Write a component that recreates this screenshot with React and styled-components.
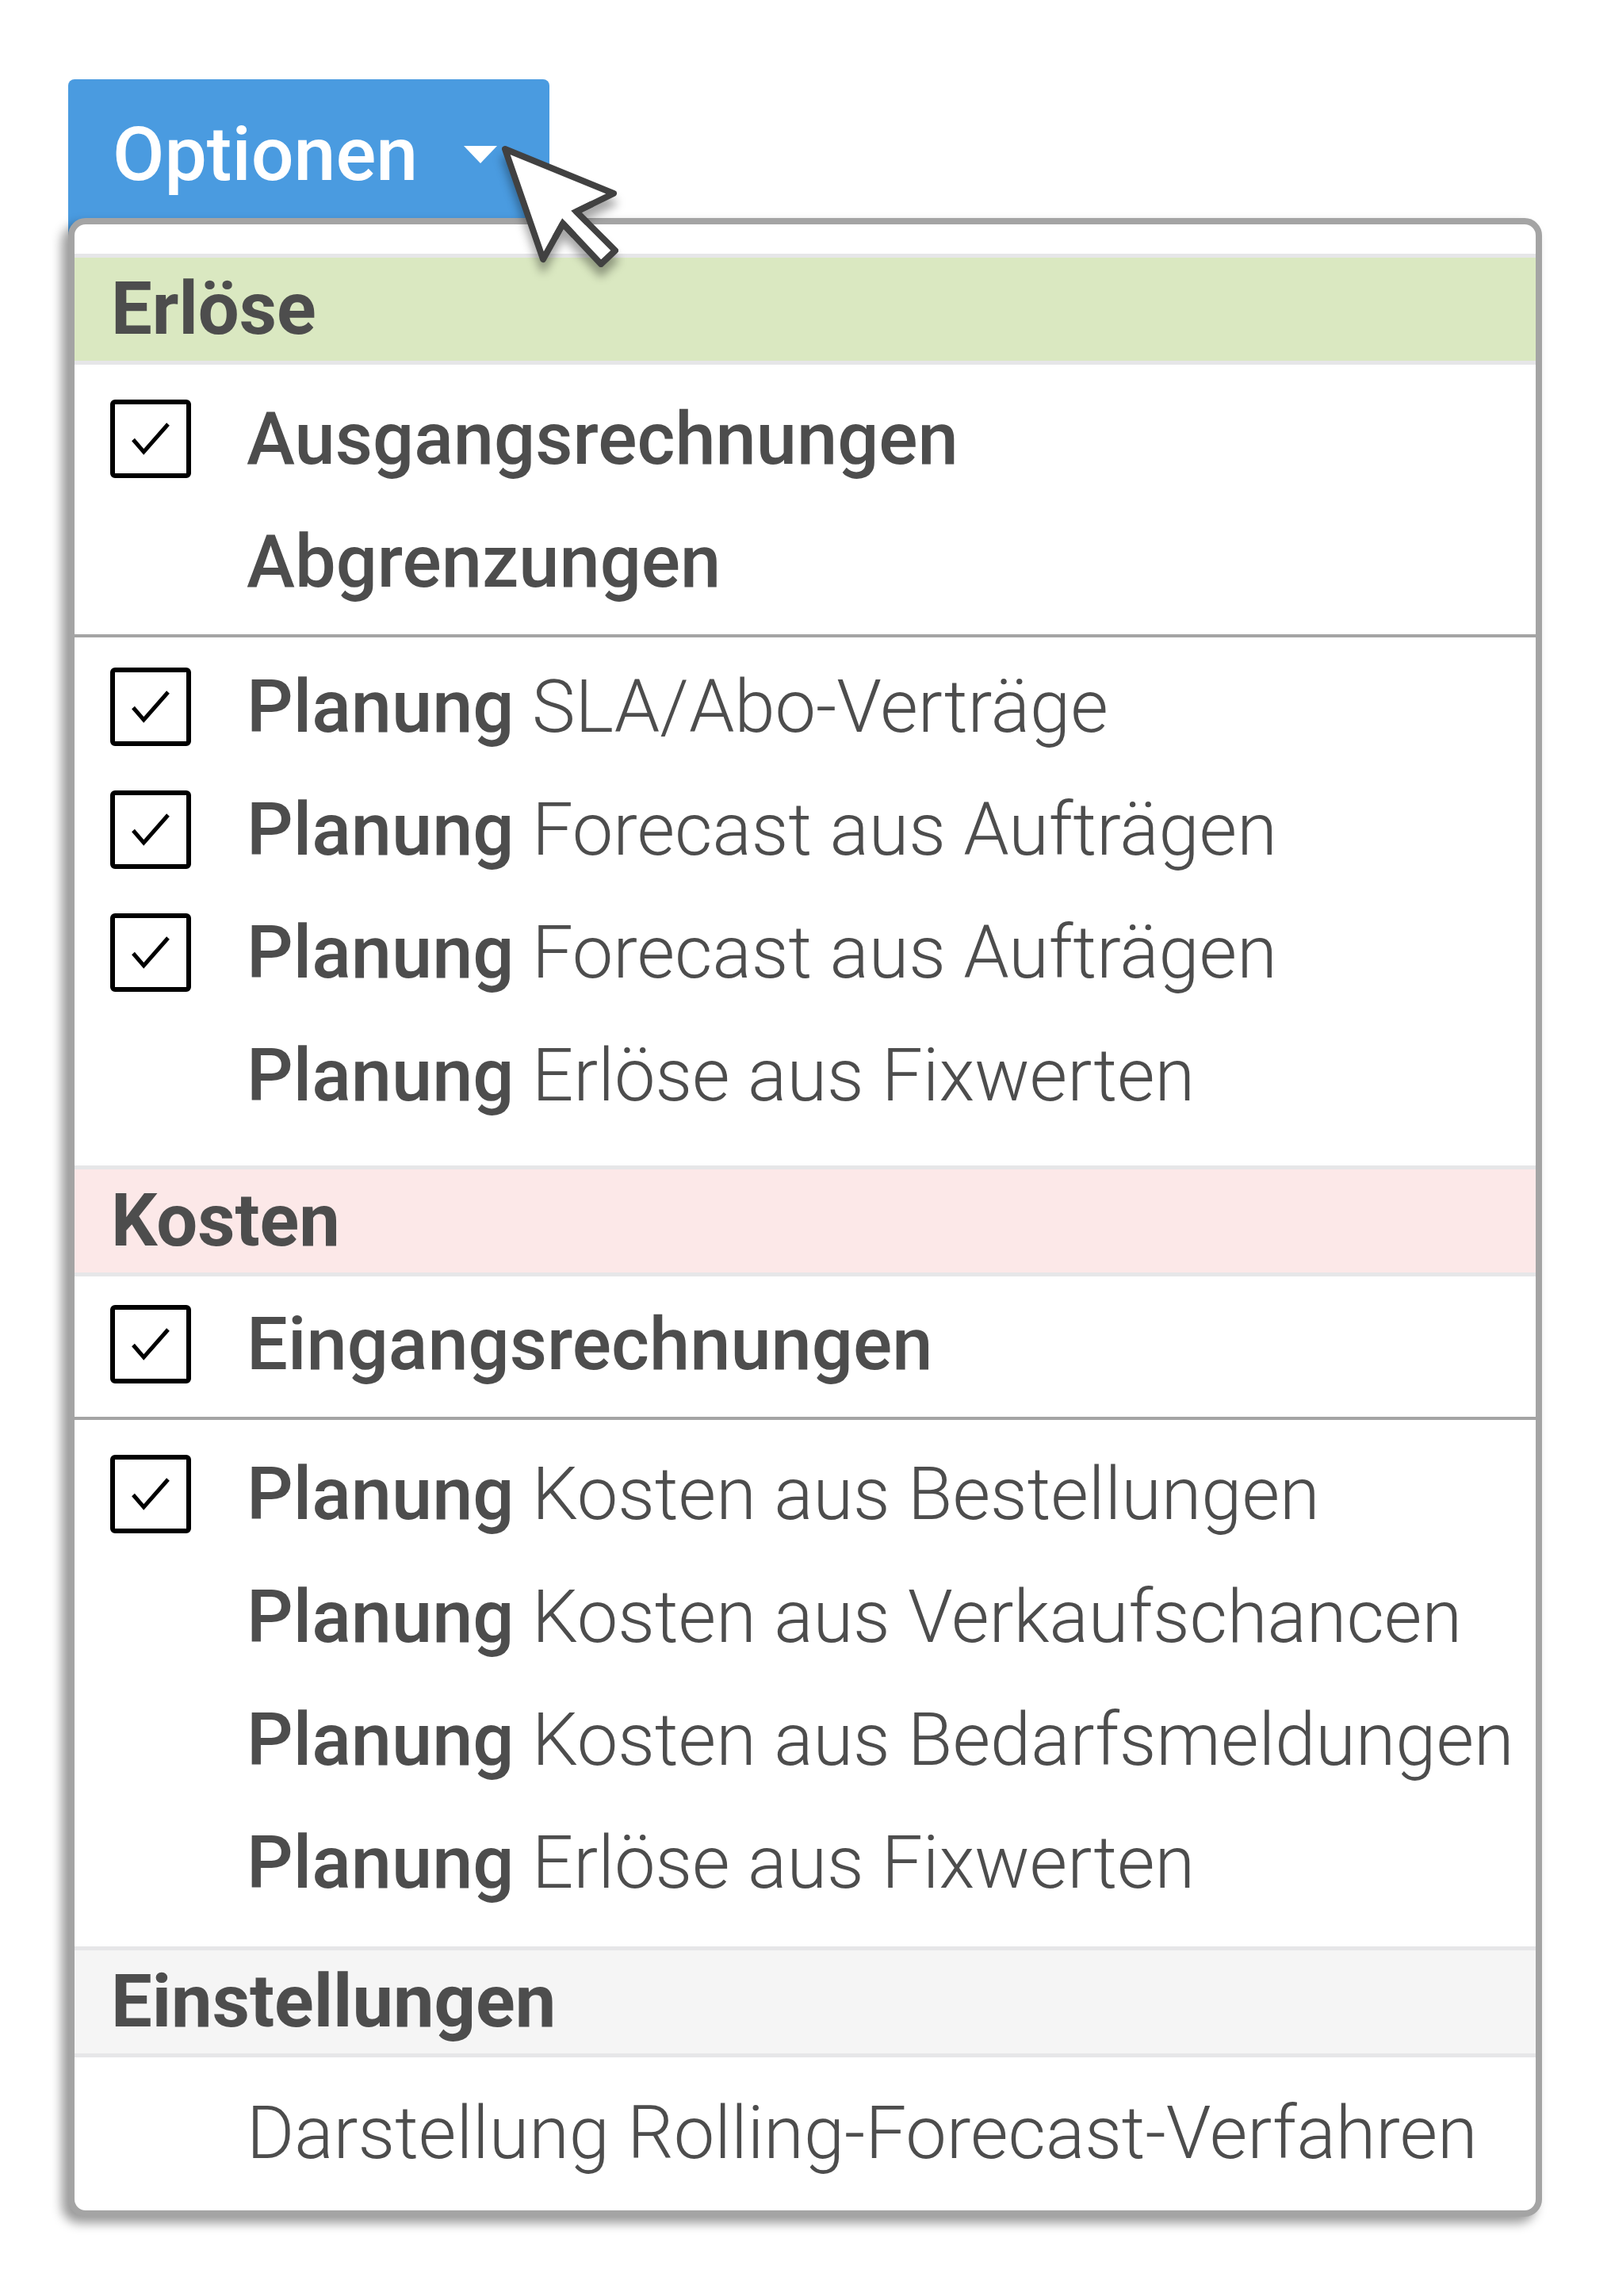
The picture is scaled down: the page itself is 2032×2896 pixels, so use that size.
import React from 'react'
import styled, { createGlobalStyle, css } from 'styled-components'

const colors = {
  blue: '#4a9be0',
  green: '#dae8c1',
  pink: '#fce8e8',
  smoke: '#f5f5f5',
  line: '#e6e6e8',
  border: '#a4a4a4',
  text: '#4d4d4d'
}

const GlobalStyle = createGlobalStyle`
  * {
    box-sizing: border-box;
  }

  body {
    background: #fff;
    color: ${colors.text};
    font-family: Roboto, 'Liberation Sans', sans-serif;
    font-size: 92px;
    margin: 0;
  }
`

const Page = styled.main`
  padding: 100px 87px 100px 86px;
`

const Toggle = styled.button`
  align-items: center;
  background: ${colors.blue};
  border: 0;
  border-radius: 8px 8px 0 0;
  color: #fff;
  display: flex;
  font: inherit;
  font-size: 95px;
  font-weight: 500;
  gap: 58px;
  line-height: 109px;
  margin: 0 0 -24px;
  padding: 40px 66px 50px 56px;
  position: relative;
`

const Caret = styled.svg`
  display: block;
  height: 22px;
  width: 42px;
`

const Cursor = styled.svg`
  filter: drop-shadow(0 12px 6px rgba(0, 0, 0, .35));
  height: 164px;
  left: 541px;
  overflow: visible;
  pointer-events: none;
  position: absolute;
  top: 78px;
  width: 156px;
  z-index: 2;
`

const Menu = styled.div`
  background: #fff;
  border: 8px solid ${colors.border};
  border-radius: 22px;
  box-shadow: -8px 8px 14px rgba(0, 0, 0, .4);
  padding: 37px 0 0;
  position: relative;
`

const Heading = styled.h2`
  background: ${p => p.$color};
  border: solid ${colors.line};
  border-width: 5px 0;
  font-size: 92px;
  font-weight: 700;
  line-height: 130px;
  margin: 0;
  padding: 0 46px;
`

const Group = styled.ul`
  list-style: none;
  margin: 0;
  padding: ${p => p.$top}px 0 ${p => p.$bottom}px;

  ${p => p.$divided && css`
    border-bottom: 4px solid ${colors.border};
  `}
`

const Option = styled.label`
  align-items: center;
  cursor: pointer;
  display: flex;
  font-weight: 300;
  gap: 70px;
  line-height: 155px;
  padding: 0 0 0 45px;
  white-space: nowrap;
`

const Strong = styled.b`
  font-weight: 500;
`

const Box = styled.span`
  display: grid;
  flex: none;
  height: 99px;
  width: 102px;

  > * {
    grid-area: 1 / 1;
  }
`

const Checkbox = styled.input`
  appearance: none;
  border: 6px solid transparent;
  border-radius: 6px;
  height: 99px;
  margin: 0;
  width: 102px;

  &:checked {
    border-color: #000;
  }

  & + svg {
    visibility: hidden;
  }

  &:checked + svg {
    visibility: visible;
  }
`

const sections = [
  {
    title: 'Erlöse',
    color: colors.green,
    groups: [
      {
        top: 16,
        bottom: 14,
        options: [
          { strong: 'Ausgangsrechnungen', checked: true },
          { strong: 'Abgrenzungen' }
        ]
      },
      {
        top: 10,
        bottom: 36,
        options: [
          { strong: 'Planung', text: 'SLA/Abo-Verträge', checked: true },
          { strong: 'Planung', text: 'Forecast aus Aufträgen', checked: true },
          { strong: 'Planung', text: 'Forecast aus Aufträgen', checked: true },
          { strong: 'Planung', text: 'Erlöse aus Fixwerten' }
        ]
      }
    ]
  },
  {
    title: 'Kosten',
    color: colors.pink,
    groups: [
      {
        top: 8,
        bottom: 14,
        options: [
          { strong: 'Eingangsrechnungen', checked: true }
        ]
      },
      {
        top: 16,
        bottom: 28,
        options: [
          { strong: 'Planung', text: 'Kosten aus Bestellungen', checked: true },
          { strong: 'Planung', text: 'Kosten aus Verkaufschancen' },
          { strong: 'Planung', text: 'Kosten aus Bedarfsmeldungen' },
          { strong: 'Planung', text: 'Erlöse aus Fixwerten' }
        ]
      }
    ]
  },
  {
    title: 'Einstellungen',
    color: colors.smoke,
    groups: [
      {
        top: 18,
        bottom: 20,
        options: [
          { text: 'Darstellung Rolling-Forecast-Verfahren' }
        ]
      }
    ]
  }
]

const MenuOption = ({ strong, text, checked }) => (
  <li>
    <Option>
      <Box>
        <Checkbox type='checkbox' defaultChecked={checked} />
        <svg viewBox='0 0 102 99' fill='none' stroke='#000' strokeWidth='5' pointerEvents='none'>
          <path d='M29 50.5 42.3 66 73 31' />
        </svg>
      </Box>
      <span>
        {strong && <Strong>{strong}</Strong>}
        {strong && text && ' '}
        {text}
      </span>
    </Option>
  </li>
)

const App = () => (
  <Page>
    <GlobalStyle />
    <Toggle type='button' aria-expanded='true'>
      Optionen
      <Caret viewBox='0 0 42 22' fill='#fff'>
        <path d='M0 0h42L21 22z' />
      </Caret>
      <Cursor viewBox='0 0 156 164' fill='#fff' stroke='#414141' strokeWidth='8'>
        <path strokeLinejoin='round' d='M10 10 147 66 100 89 149 138 131 155 83 104 58 149z' />
        {/* the two inner corners stay pointed */}
        <path fill='none' d='M120 79.2 100 89 114 103M97 118.9 83 104 73 122' />
      </Cursor>
    </Toggle>
    <Menu>
      {sections.map(({ title, color, groups }) => (
        <section key={title}>
          <Heading $color={color}>{title}</Heading>
          {groups.map(({ top, bottom, options }, i) => (
            <Group key={i} $top={top} $bottom={bottom} $divided={i < groups.length - 1}>
              {options.map((option, j) => <MenuOption key={j} {...option} />)}
            </Group>
          ))}
        </section>
      ))}
    </Menu>
  </Page>
)

export default App
